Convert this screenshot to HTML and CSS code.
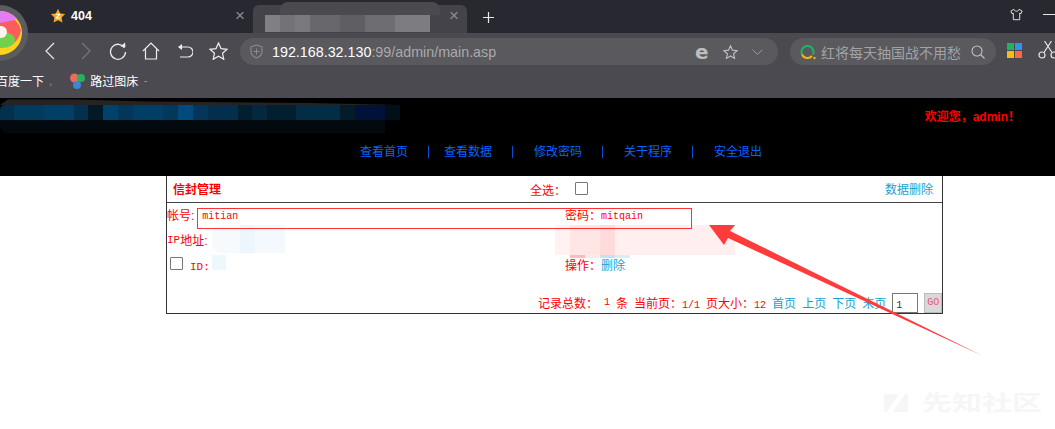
FILE: index.html
```html
<!DOCTYPE html>
<html lang="zh-CN">
<head>
    <meta charset="UTF-8">
    <title>404</title>
    <link rel="stylesheet" href="styles.css">
</head>
<body>
<!-- browser frame -->
<div class="tabbar">
    <div class="tab">
        <svg class="tab-star" width="16" height="16" viewBox="0 0 16 16"><path d="M8 .8l2.2 4.600 5 .7-3.600 3.500.9 5L8 12.200l-4.500 2.400.9-5L.8 6.100l5-.7z" fill="#f5a623"/><path d="M5.600 5.800h4.800v1L7.300 9.600h3.100v1H5.600v-1l3.100-2.800H5.600z" fill="#fff"/></svg>
        <span class="tab-title">404</span>
        <span class="tab-close">×</span>
    </div>
    <div class="tab tab-active">
        <span class="tab-blur"></span>
        <span class="tab-close">×</span>
    </div>
    <svg class="tab-plus" width="13" height="13" viewBox="0 0 13 13"><path d="M6.500 1v11M1 6.500h11" stroke="#e8e8e8" stroke-width="1.200"/></svg>
    <div class="win-btns">
        <svg width="14" height="13" viewBox="0 0 15 14"><path d="M4.500 1L1 3l1.200 3 1.600-.6V13h7.400V5.400l1.600.6L14 3l-3.500-2c-.5 1.600-1.500 2.200-3 2.200S5 2.600 4.500 1z" fill="none" stroke="#e6e6e6" stroke-width="1.100"/></svg>
        <span class="win-min"></span>
    </div>
</div>
<div class="toolbar">
    <svg class="nav-ico" width="12" height="18" viewBox="0 0 12 18"><path d="M10 1L2 9l8 8" fill="none" stroke="#e8e8e8" stroke-width="1.200"/></svg>
    <svg class="nav-ico nav-fwd" width="12" height="18" viewBox="0 0 12 18"><path d="M2 1l8 8-8 8" fill="none" stroke="#76767a" stroke-width="1.200"/></svg>
    <svg class="nav-ico nav-reload" width="18" height="18" viewBox="0 0 18 18"><path d="M15.500 6A7.500 7.500 0 1 0 16.500 10" fill="none" stroke="#eee" stroke-width="1.300"/><path d="M11.500 4.500l5 .5-.5-4.500z" fill="#eee"/></svg>
    <svg class="nav-ico nav-home" width="18" height="18" viewBox="0 0 18 18"><path d="M1 9l8-8 8 8M3.500 7.500V17h11V7.500" fill="none" stroke="#eee" stroke-width="1.200"/></svg>
    <svg class="nav-ico nav-undo" width="16" height="16" viewBox="0 0 16 16"><path d="M4 4h7a4.500 4.500 0 0 1 0 10H3" fill="none" stroke="#eee" stroke-width="1.200"/><path d="M5 1L1 4l4 3z" fill="#eee"/></svg>
    <svg class="nav-ico nav-star" width="19" height="18" viewBox="0 0 19 18"><path d="M9.500 1l2.500 5.600 6 .7-4.500 4 1.300 6-5.300-3.100-5.300 3.100 1.300-6-4.500-4 6-.7z" fill="none" stroke="#eee" stroke-width="1.200"/></svg>
    <div class="urlbar">
        <svg width="13" height="15" viewBox="0 0 13 15"><path d="M6.500 1L1 2.800v5c0 3 2.400 5 5.500 6.200 3.100-1.200 5.500-3.200 5.500-6.200v-5z" fill="none" stroke="#8c8c90" stroke-width="1.100"/><path d="M6.500 4.500v6M3.500 7.500h6" stroke="#8c8c90"/></svg>
        <span class="url"><b>192.168.32.130</b>:99/admin/main.asp</span>
        <span class="url-e">e</span>
        <svg width="15" height="14" viewBox="0 0 19 18"><path d="M9.500 1l2.500 5.600 6 .7-4.500 4 1.300 6-5.300-3.100-5.300 3.100 1.300-6-4.500-4 6-.7z" fill="none" stroke="#bdbdbf" stroke-width="1.500"/></svg>
        <svg width="11" height="6" viewBox="0 0 11 6"><path d="M.5.500l5 5 5-5" fill="none" stroke="#9a9a9d"/></svg>
    </div>
    <div class="searchbar">
        <svg width="16" height="16" viewBox="0 0 16 16"><path d="M2 10.500A6 6 0 1 1 13 10.500" fill="none" stroke="#21b561" stroke-width="2"/><path d="M2 10.500A6 6 0 0 0 12 12" fill="none" stroke="#f6b11b" stroke-width="2"/><circle cx="14.500" cy="14" r="1.200" fill="#f6b11b"/></svg>
        <span class="search-text">红将每天抽国战不用愁</span>
        <svg width="14" height="14" viewBox="0 0 14 14"><circle cx="6" cy="6" r="5" fill="none" stroke="#c4c4c6" stroke-width="1.100"/><path d="M9.500 9.500L13.500 13.500" stroke="#c4c4c6" stroke-width="1.100"/></svg>
    </div>
    <div class="app-grid"><i class="sq-green"></i><i class="sq-blue"></i><i class="sq-yellow"></i><i class="sq-orange"></i></div>
    <svg class="scissors" width="20" height="18" viewBox="0 0 20 18"><circle cx="4" cy="14" r="3" fill="none" stroke="#e8e8e8" stroke-width="1.200"/><circle cx="16" cy="14" r="3" fill="none" stroke="#e8e8e8" stroke-width="1.200"/><path d="M6 11.500L13.500 0M14 11.500L6.500 0" stroke="#e8e8e8" stroke-width="1.200"/></svg>
</div>
<div class="bookmarks">
    <span class="mark-first">百度一下</span><span class="mark-dim">,</span>
    <svg class="mark-logo" width="15" height="16" viewBox="0 0 15 16"><circle cx="4.500" cy="5" r="4.500" fill="#e2705f"/><circle cx="11" cy="5" r="4" fill="#22b45c"/><circle cx="7" cy="12" r="4" fill="#3f86d6"/></svg>
    <span>路过图床</span><span class="mark-dim">-</span>
</div>

<!-- admin page -->
<div class="site-head">
    <div class="welcome">欢迎您，admin！</div>
    <div class="site-nav">
        <a>查看首页</a><i class="first"></i><a>查看数据</a><i></i><a>修改密码</a><i></i><a>关于程序</a><i></i><a>安全退出</a>
    </div>
</div>
<div class="panel">
    <div class="panel-head">
        <b class="panel-title">信封管理</b>
        <span class="check-all">全选：</span>
        <span class="checkbox"></span>
        <a class="link del-data">数据删除</a>
    </div>
    <div class="record">
        <div class="field field-user">帐号:<code>mitian</code></div>
        <div class="field">密码：<code>mitqain</code></div>
        <div class="field"><span class="mono-label">IP</span>地址:</div>
        <div class="field"></div>
        <div class="field field-id"><span class="checkbox"></span><span class="mono-label">ID:</span></div>
        <div class="field">操作：<a class="link">删除</a></div>
    </div>
    <div class="pager">
        <span>记录总数：</span>
        <code>1</code>
        <span>条</span>
        <span>当前页：<code>1/1</code></span>
        <span>页大小：<code>12</code></span>
        <a class="link">首页</a>
        <a class="link">上页</a>
        <a class="link">下页</a>
        <a class="link">末页</a>
        <span class="page-input"><code>1</code></span>
        <span class="go-btn">GO</span>
    </div>
</div>

<!-- things lying over the screenshot -->
<svg class="logo-ball" width="30" height="64" viewBox="0 0 30 64">
    <circle cx="0" cy="33" r="28" fill="#5c5c60"/>
    <circle cx="0" cy="33" r="22" fill="#ffd21e"/>
    <path d="M0 11A22 22 0 0 1 17 19L0 26z" fill="#e57df2"/>
    <path d="M0 23L15 20A22 22 0 0 1 21 30 22 22 0 0 1 13 44L0 38z" fill="#fb5c5c"/>
    <ellipse cx="2" cy="40" rx="13" ry="8" fill="#71d14d"/>
    <circle cx="1" cy="32" r="6" fill="#fdf3ee"/>
</svg>
<div class="blur blur-head"></div>
<div class="blur blur-ip"></div>
<div class="blur blur-id"></div>
<div class="blur blur-addr"></div>
<div class="mark-box"></div>
<svg class="arrow" width="1055" height="429" viewBox="0 0 1055 429"><polygon points="709,225 735,225 730,231 983,356 728,238 724,245" fill="#ff3b3b"/></svg>
<div class="watermark">
    <svg width="29" height="18" viewBox="0 0 29 18"><path d="M0 0h15L3 18H0zM21 0h3v18H9z" fill="#f6f6f6"/></svg>
    <span>先知社区</span>
</div>
</body>
</html>
```

FILE: styles.css
```css
* {
    padding: 0;
    margin: 0;
    box-sizing: border-box;
}
html, body {
    height: 429px;
    overflow: hidden;
}
body {
    position: relative;
    background: #fff;
    font-family: "Liberation Sans", "Noto Sans CJK SC", sans-serif;
    font-size: 12px;
}
code {
    font-family: "Liberation Mono", monospace;
    font-size: 10px;
}
a {
    cursor: pointer;
}

/* browser frame */
.tabbar {
    height: 33px;
    background: #282830;
    display: flex;
    align-items: flex-end;
    color: #fff;
}
.tab {
    width: 203px;
    height: 28px;
    margin-left: 50px;
    padding-bottom: 7px;
    display: flex;
    align-items: center;
}
.tab-star {
    margin-right: 5px;
}
.tab-title {
    font-size: 12.5px;
    font-weight: bold;
    flex: 1;
}
.tab-close {
    color: #8b8b90;
    font-size: 17px;
    line-height: 14px;
    margin-right: 8px;
}
.tab-active {
    width: 214px;
    margin-left: 0;
    background: #434349;
    border-radius: 6px 6px 0 0;
    position: relative;
    justify-content: flex-end;
}
.tab-blur {
    position: absolute;
    left: 12px;
    top: 10px;
    width: 165px;
    height: 17px;
    background: linear-gradient(90deg, #808084 0 15px, #737377 15px 30px, #7a7a7e 30px 45px, #68686c 45px 75px, #5f5f63 75px 100px, #6e6e72 100px 130px, #7d7d81 130px 165px);
}
.tab-blur::before {
    content: "";
    position: absolute;
    left: 15px;
    top: -13px;
    width: 160px;
    height: 13px;
    border-radius: 8px 8px 0 0;
    background: #4a4a4f;
}
.tab-plus {
    margin: 0 0 9px 15px;
}
.win-btns {
    margin-left: auto;
    width: 45px;
    padding-bottom: 12px;
    display: flex;
    align-items: center;
    gap: 20px;
    flex: none;
}
.win-min {
    width: 12px;
    height: 1px;
    flex: none;
    background: #e6e6e6;
}
.toolbar {
    height: 32px;
    background: #4a4a50;
    display: flex;
    align-items: flex-end;
    padding-left: 44px;
}
.nav-ico {
    margin-bottom: 5px;
    flex: none;
}
.nav-fwd { margin-left: 24px; }
.nav-reload { margin-left: 17px; }
.nav-home { margin-left: 15px; }
.nav-undo { margin-left: 17px; margin-bottom: 6px; }
.nav-star { margin-left: 16px; }
.urlbar {
    width: 538px;
    height: 27px;
    margin-left: 12px;
    background: #59595e;
    border-radius: 14px;
    display: flex;
    align-items: center;
    padding-left: 10px;
    flex: none;
}
.url {
    margin-left: 9px;
    width: 423px;
    font-size: 14.3px;
    color: #a9a9ac;
}
.url b {
    font-weight: normal;
    color: #fff;
}
.url-e {
    width: 28px;
    font-family: "DejaVu Sans", sans-serif;
    font-size: 20px;
    line-height: 20px;
    font-weight: bold;
    color: #bdbdbf;
}
.urlbar svg:last-child {
    margin-left: 14px;
}
.searchbar {
    width: 206px;
    height: 27px;
    margin-left: 12px;
    background: #59595e;
    border-radius: 14px;
    display: flex;
    align-items: center;
    padding-left: 10px;
    flex: none;
}
.search-text {
    margin-left: 5px;
    width: 150px;
    font-size: 14px;
    color: #a3a3a6;
    white-space: nowrap;
}
.app-grid {
    width: 15px;
    height: 15px;
    margin: 0 0 7px 11px;
    display: grid;
    grid-template-columns: 7px 7px;
    grid-auto-rows: 7px;
    gap: 1px;
    flex: none;
}
.sq-green { background: #1fb45f; }
.sq-blue { background: #2b93f0; }
.sq-yellow { background: #f9b91c; }
.sq-orange { background: #fb6a3c; }
.scissors {
    margin: 0 0 6px 16px;
    flex: none;
}
.bookmarks {
    height: 33px;
    background: #4a4a50;
    display: flex;
    align-items: center;
    padding-bottom: 2px;
    font-size: 12px;
    color: #fff;
}
.mark-first {
    margin-left: -4px;
}
.mark-dim {
    margin-left: 5px;
    color: #8a8a8e;
}
.mark-logo {
    margin: 0 5px 0 18px;
}

/* admin page */
.site-head {
    height: 78px;
    background: #000;
    padding-top: 11px;
}
.welcome {
    height: 27px;
    padding-right: 35px;
    text-align: right;
    line-height: 16px;
    font-weight: bold;
    color: #f00;
}
.site-nav {
    margin-top: 8px;
    padding-left: 360px;
    display: flex;
    align-items: center;
    gap: 20px;
    line-height: 16px;
    color: #0a64ff;
}
.site-nav i {
    width: 1px;
    height: 12px;
    margin-right: 1px;
    background: #0a4fd0;
}
.site-nav i.first {
    margin-right: -5px;
}
.panel {
    width: 777px;
    height: 138px;
    margin-left: 166px;
    border: 1px solid #333;
    border-top: 0;
    color: #f00;
}
.panel-head {
    height: 27px;
    border-bottom: 1px solid #444;
    display: flex;
    align-items: center;
    padding: 0 9px 2px 6px;
}
.panel-title {
    width: 357px;
}
.check-all {
    width: 45px;
    padding-top: 3px;
}
.checkbox {
    width: 13px;
    height: 13px;
    border: 1px solid #767676;
    border-radius: 1px;
    background: #fff;
    display: inline-block;
    flex: none;
}
.del-data {
    margin-left: auto;
}
.link {
    color: #1ba0cf;
}
.record {
    margin-top: -1px;
    display: grid;
    grid-template-columns: 398px 1fr;
    grid-auto-rows: 25px;
}
.field {
    display: flex;
    align-items: center;
    white-space: pre;
}
.field code {
    padding-top: 4px;
}
.field-user code {
    margin-left: 8px;
}
.mono-label {
    font-family: "Liberation Mono", monospace;
    font-size: 11px;
}
.field-id .checkbox {
    margin: 0 7px 3px 3px;
}
.field-id .mono-label {
    padding-top: 5px;
}
.pager {
    margin-top: 15px;
    padding-left: 371px;
    height: 21px;
    display: flex;
    align-items: center;
    gap: 6px;
    white-space: nowrap;
}
.pager > * {
    flex: none;
}
.page-input {
    width: 26px;
    height: 20px;
    border: 1px solid #767676;
    padding: 3px;
    color: #333;
}
.go-btn {
    width: 18px;
    height: 20px;
    background: #d9d9d9;
    border: 1px solid #bbb;
    font-family: "Liberation Mono", monospace;
    font-size: 10px;
    line-height: 18px;
    text-align: center;
    color: #f0567a;
}

/* overlays */
.logo-ball {
    position: absolute;
    left: 0;
    top: 0;
}
.blur {
    position: absolute;
}
.blur-head {
    left: 0;
    top: 105px;
    width: 400px;
    height: 15px;
    border-radius: 5px 0 0 0;
    background: linear-gradient(90deg, #03314d 0 14px, #023a5c 14px 44px, #013f66 44px 74px, #03304c 74px 88px, #021a28 88px 103px, #01426a 103px 118px, #03365a 118px 133px, #013e66 133px 163px, #03385a 163px 178px, #004a7c 178px 193px, #03365a 193px 208px, #032f4c 208px 238px, #021f30 238px 252px, #03283f 252px 267px, #021f30 267px 296px, #032c45 296px 340px, #041c2a 340px 355px, #00123a 355px 385px, #010f18 385px 400px);
}
.blur-head::before {
    content: "";
    position: absolute;
    left: 0;
    top: -7px;
    width: 400px;
    height: 7px;
    background: #242424;
    clip-path: polygon(2% 20%, 19% 20%, 37% 50%, 78% 70%, 100% 100%, 0 100%);
}
.blur-head::after {
    content: "";
    position: absolute;
    left: 0;
    top: 15px;
    width: 385px;
    height: 13px;
    border-radius: 0 0 0 8px;
    background: #020a10;
}
.blur-ip {
    left: 212px;
    top: 225px;
    width: 73px;
    height: 28px;
    border-radius: 10px 0 0 10px;
    background: linear-gradient(90deg, #f6fafd 0 28px, #edf6fc 28px 43px, #f3f9fd 43px 73px);
}
.blur-id {
    left: 212px;
    top: 255px;
    width: 14px;
    height: 15px;
    background: #eef7fb;
}
.blur-addr {
    left: 555px;
    top: 225px;
    width: 180px;
    height: 30px;
    background: linear-gradient(90deg, #fff2f1 0 15px, #ffe6e5 15px 45px, #ffdcdb 45px 60px, #ffefee 60px 180px);
}
.blur-addr::after {
    content: "";
    position: absolute;
    left: 15px;
    top: 30px;
    width: 60px;
    height: 3px;
    background: linear-gradient(90deg, #ffbbbb 0 15px, #ffe9e9 15px 30px, #bfe3fa 30px 45px, #d5f0fb 45px 60px);
}
.mark-box {
    position: absolute;
    left: 197px;
    top: 208px;
    width: 495px;
    height: 21px;
    border: 1px solid #f33;
}
.arrow {
    position: absolute;
    left: 0;
    top: 0;
    pointer-events: none;
}
.watermark {
    position: absolute;
    left: 884px;
    top: 390px;
    height: 26px;
    display: flex;
    align-items: center;
    gap: 9px;
    font-size: 30px;
    line-height: 30px;
    font-weight: bold;
    color: #f6f6f6;
    white-space: nowrap;
}
.watermark span {
    transform: scaleY(0.7);
}
```
